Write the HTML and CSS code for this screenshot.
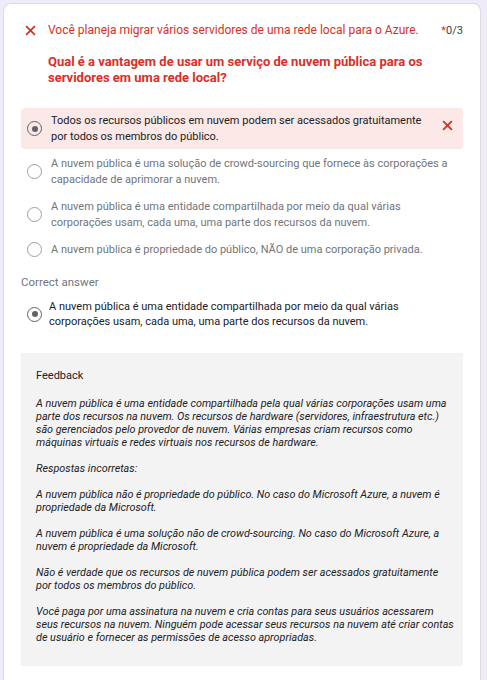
FILE: index.html
```html
<!DOCTYPE html>
<html lang="pt">
<head>
<meta charset="utf-8">
<link rel="stylesheet" href="styles.css">
</head>
<body>
<div class="card">
  <div class="head">
    <svg class="x-icon head-x" viewBox="0 0 10 10" width="11" height="11"><path d="M1 1 L9 9 M9 1 L1 9" stroke="#d93025" stroke-width="1.6" fill="none"/></svg>
    <div class="head-text">
      <div class="title-row">
        <span class="title">Você planeja migrar vários servidores de uma rede local para o Azure.</span>
        <span class="score"><span class="star">*</span>0/3</span>
      </div>
      <div class="question">Qual é a vantagem de usar um serviço de nuvem pública para os servidores em uma rede local?</div>
    </div>
  </div>

  <div class="options">
    <div class="option wrong">
      <span class="radio checked"></span>
      <span class="opt-text">Todos os recursos públicos em nuvem podem ser acessados gratuitamente por todos os membros do público.</span>
      <svg class="x-icon opt-x" viewBox="0 0 10 10" width="11" height="11"><path d="M1 1 L9 9 M9 1 L1 9" stroke="#d93025" stroke-width="1.6" fill="none"/></svg>
    </div>
    <div class="option muted">
      <span class="radio"></span>
      <span class="opt-text">A nuvem pública é uma solução de crowd-sourcing que fornece às corporações a capacidade de aprimorar a nuvem.</span>
    </div>
    <div class="option muted">
      <span class="radio"></span>
      <span class="opt-text">A nuvem pública é uma entidade compartilhada por meio da qual várias corporações usam, cada uma, uma parte dos recursos da nuvem.</span>
    </div>
    <div class="option muted">
      <span class="radio"></span>
      <span class="opt-text">A nuvem pública é propriedade do público, NÃO de uma corporação privada.</span>
    </div>
  </div>

  <div class="correct-label">Correct answer</div>
  <div class="option correct">
    <span class="radio checked"></span>
    <span class="opt-text">A nuvem pública é uma entidade compartilhada por meio da qual várias corporações usam, cada uma, uma parte dos recursos da nuvem.</span>
  </div>

  <div class="feedback">
    <div class="fb-title">Feedback</div>
    <div class="fb-body">
      <p>A nuvem pública é uma entidade compartilhada pela qual várias corporações usam uma parte dos recursos na nuvem. Os recursos de hardware (servidores, infraestrutura etc.) são gerenciados pelo provedor de nuvem. Várias empresas criam recursos como máquinas virtuais e redes virtuais nos recursos de hardware.</p>
      <p>Respostas incorretas:</p>
      <p>A nuvem pública não é propriedade do público. No caso do Microsoft Azure, a nuvem é propriedade da Microsoft.</p>
      <p>A nuvem pública é uma solução não de crowd-sourcing. No caso do Microsoft Azure, a nuvem é propriedade da Microsoft.</p>
      <p>Não é verdade que os recursos de nuvem pública podem ser acessados gratuitamente por todos os membros do público.</p>
      <p>Você paga por uma assinatura na nuvem e cria contas para seus usuários acessarem seus recursos na nuvem. Ninguém pode acessar seus recursos na nuvem até criar contas de usuário e fornecer as permissões de acesso apropriadas.</p>
    </div>
  </div>
</div>
</body>
</html>
```

FILE: styles.css
```css
html, body {
  margin: 0;
  padding: 0;
  background: #f0ebf8;
  font-family: Roboto, "Liberation Sans", sans-serif;
  color: #202124;
}

.card {
  margin: 3px 6px 0 3px;
  background: #fff;
  border: 1px solid #dadce0;
  border-bottom: none;
  border-radius: 8px 8px 0 0;
  padding: 0 17px 30px 17px;
  min-height: 700px;
}

.head {
  display: flex;
  padding-top: 18px;
}

.x-icon {
  display: block;
  flex: none;
}

.head-x {
  margin: 3px 0 0 4px;
}

.head-text {
  flex: 1;
  margin-left: 12px;
}

.title-row {
  display: flex;
  justify-content: space-between;
  align-items: flex-start;
}

.title {
  font-size: 12px;
  line-height: 17px;
  color: #d93025;
}

.score {
  font-size: 11px;
  line-height: 17px;
  color: #3c4043;
}

.star {
  color: #d93025;
}

.question {
  margin-top: 15px;
  font-size: 13px;
  font-weight: 700;
  line-height: 16px;
  color: #d93025;
}

.options {
  margin-top: 22px;
  display: flex;
  flex-direction: column;
  gap: 2px;
}

.option {
  display: flex;
  align-items: center;
  padding: 5px 0 5px 6px;
  font-size: 11px;
  line-height: 15.5px;
  border-radius: 4px;
}

.option.wrong {
  background: #fce8e6;
  color: #202124;
}

.option.muted {
  color: #70757a;
}

.radio {
  flex: none;
  box-sizing: border-box;
  width: 15px;
  height: 15px;
  border: 1.5px solid #9aa0a6;
  border-radius: 50%;
  margin-right: 9px;
  position: relative;
}

.radio.checked {
  border-color: #5f6368;
}

.radio.checked::after {
  content: "";
  position: absolute;
  left: 50%;
  top: 50%;
  width: 6px;
  height: 6px;
  margin: -3px 0 0 -3px;
  border-radius: 50%;
  background: #5f6368;
}

.opt-text {
  flex: 1;
}

.opt-x {
  margin: -6px 10px 0 18px;
}

.correct-label {
  margin-top: 11px;
  font-size: 11.5px;
  line-height: 16px;
  color: #70757a;
}

.option.correct {
  margin-top: 4px;
  padding-right: 34px;
  color: #202124;
}

.option.correct .radio {
  margin-right: 7px;
}

.feedback {
  margin-top: 18px;
  background: #f3f3f3;
  padding: 15px 8px 22px 15px;
}

.fb-title {
  font-size: 11px;
  line-height: 16px;
  color: #202124;
}

.fb-body {
  margin-top: 13px;
  font-size: 10.8px;
  line-height: 13px;
  font-style: italic;
  color: #202124;
}

.fb-body p {
  margin: 0 0 13px 0;
}

.fb-body p:last-child {
  margin-bottom: 0;
}
```
